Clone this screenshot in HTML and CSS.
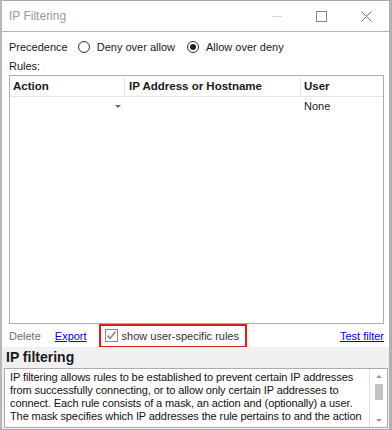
FILE: index.html
```html
<!DOCTYPE html>
<html lang="en">
<head>
  <meta charset="UTF-8">
  <title>IP Filtering</title>
  <link rel="stylesheet" href="styles.css">
</head>
<body>
  <div class="window">
    <div class="titlebar">
      <span class="title">IP Filtering</span>
      <div class="controls">
        <span class="ctl min"></span>
        <span class="ctl max"></span>
        <span class="ctl close">
          <svg width="11" height="11" viewBox="0 0 11 11"><path d="M0.5 0.5 L10.5 10.5 M10.5 0.5 L0.5 10.5" stroke="#777" stroke-width="1" fill="none"/></svg>
        </span>
      </div>
    </div>

    <div class="content">
      <div class="precedence">
        <span>Precedence</span>
        <label class="radio"><span class="dot"></span>Deny over allow</label>
        <label class="radio"><span class="dot checked"></span>Allow over deny</label>
      </div>

      <div class="rules-label">Rules:</div>
      <div class="grid">
        <div class="grid-head">
          <div class="col c-action">Action</div>
          <div class="col c-ip">IP Address or Hostname</div>
          <div class="col c-user">User</div>
        </div>
        <div class="grid-row">
          <div class="col c-action"><span class="caret"></span></div>
          <div class="col c-ip"></div>
          <div class="col c-user">None</div>
        </div>
      </div>

      <div class="actions">
        <span class="disabled">Delete</span>
        <a class="link" href="#">Export</a>
        <div class="highlight">
          <span class="check">
            <svg width="11" height="11" viewBox="0 0 11 11"><path d="M1.5 5.5 L4 8.5 L9.5 1.5" stroke="#888" stroke-width="1.6" fill="none"/></svg>
          </span>
          show user-specific rules
        </div>
        <a class="link test" href="#">Test filter</a>
      </div>
    </div>

    <div class="help">
      <div class="help-title">IP filtering</div>
      <div class="help-box">
        <div class="help-text">IP filtering allows rules to be established to prevent certain IP addresses<br>from successfully connecting, or to allow only certain IP addresses to<br>connect. Each rule consists of a mask, an action and (optionally) a user.<br>The mask specifies which IP addresses the rule pertains to and the action</div>
        <div class="scrollbar">
          <span class="arrow up"></span>
          <span class="thumb"></span>
          <span class="arrow down"></span>
        </div>
      </div>
    </div>
  </div>
</body>
</html>
```

FILE: styles.css
```css
body {
  margin: 0;
  font-family: "Liberation Sans", Arial, sans-serif;
  font-size: 11px;
  color: #1a1a1a;
  background: #fff;
}

.window {
  width: 392px;
  height: 430px;
  box-sizing: border-box;
  border: 1px solid #aaa;
  border-right: 3px solid #b0b0b0;
  border-left: 2px solid #b8b8b8;
  display: flex;
  flex-direction: column;
  background: #fff;
}

.titlebar {
  height: 30px;
  border-bottom: 1px solid #b4b4b4;
  display: flex;
  align-items: center;
  padding-left: 7px;
}
.title {
  font-size: 12px;
  color: #9a9a9a;
}
.controls {
  margin-left: auto;
  display: flex;
  align-items: center;
}
.ctl {
  width: 45px;
  height: 30px;
  display: flex;
  align-items: center;
  justify-content: center;
}
.min::before {
  content: "";
  width: 10px;
  height: 1px;
  background: #d6d6d6;
}
.max::before {
  content: "";
  width: 9px;
  height: 9px;
  border: 1px solid #888;
}

.content {
  padding: 0 5px 0 7px;
}

.precedence {
  height: 20px;
  margin-top: 5px;
  display: flex;
  align-items: center;
}
.radio {
  display: flex;
  align-items: center;
  margin-left: 10px;
}
.dot {
  width: 10px;
  height: 10px;
  border: 1px solid #333;
  border-radius: 50%;
  margin-right: 7px;
  display: flex;
  align-items: center;
  justify-content: center;
}
.dot.checked::after {
  content: "";
  width: 6px;
  height: 6px;
  border-radius: 50%;
  background: #222;
}
.radio + .radio {
  margin-left: 12px;
}

.rules-label {
  margin-top: 1px;
  height: 17px;
  line-height: 17px;
}

.grid {
  width: 375px;
  height: 249px;
  box-sizing: border-box;
  border: 1px solid #adadad;
  background: #fff;
}
.grid-head,
.grid-row {
  display: flex;
}
.grid-head {
  height: 20px;
  border-bottom: 1px solid #e5e5e5;
  font-weight: bold;
  font-size: 11.5px;
}
.grid-head .col {
  border-right: 1px solid #e5e5e5;
}
.grid-head .c-user {
  border-right: none;
}
.grid-row {
  height: 18px;
}
.col {
  box-sizing: border-box;
  padding-left: 3px;
  display: flex;
  align-items: center;
}
.c-action { width: 115px; }
.c-ip { width: 176px; padding-left: 4px; }
.c-user { width: 82px; padding-left: 3px; }
.caret {
  margin-left: auto;
  margin-right: 4px;
  border-left: 3px solid transparent;
  border-right: 3px solid transparent;
  border-top: 3px solid #666;
}

.actions {
  height: 23px;
  display: flex;
  align-items: center;
}
.disabled {
  color: #6d6d6d;
}
.link {
  color: #0000ee;
  text-decoration: underline;
}
.actions .link {
  margin-left: 14px;
}
.highlight {
  margin-left: 12px;
  height: 24px;
  box-sizing: border-box;
  border: 2px solid #e21b1b;
  padding: 0 6px 0 4px;
  display: flex;
  align-items: center;
  color: #333;
}
.check {
  width: 11px;
  height: 11px;
  border: 1px solid #8a8a8a;
  margin-right: 4px;
  display: flex;
}
.actions .test {
  margin-left: auto;
}

.help {
  flex: 1;
  background: #f0f0f0;
  padding: 0 0 1px 2px;
  display: flex;
  flex-direction: column;
}
.help-title {
  height: 21px;
  line-height: 20px;
  font-size: 14px;
  font-weight: bold;
  padding-left: 2px;
}
.help-box {
  flex: 1;
  margin-right: 1px;
  border: 1px solid #adadad;
  background: #fff;
  display: flex;
}
.help-text {
  flex: 1;
  padding: 2px 0 0 5px;
  line-height: 13px;
  letter-spacing: -0.1px;
  color: #111;
  white-space: nowrap;
  overflow: hidden;
}
.scrollbar {
  width: 17px;
  border-left: 1px solid #e0e0e0;
  display: flex;
  flex-direction: column;
  align-items: center;
}
.arrow {
  border-left: 3px solid transparent;
  border-right: 3px solid transparent;
}
.arrow.up {
  margin-top: 6px;
  border-bottom: 3px solid #999;
}
.arrow.down {
  margin-top: auto;
  margin-bottom: 5px;
  border-top: 3px solid #999;
}
.thumb {
  width: 8px;
  height: 16px;
  margin-top: 6px;
  background: #c2c2c2;
}
```
